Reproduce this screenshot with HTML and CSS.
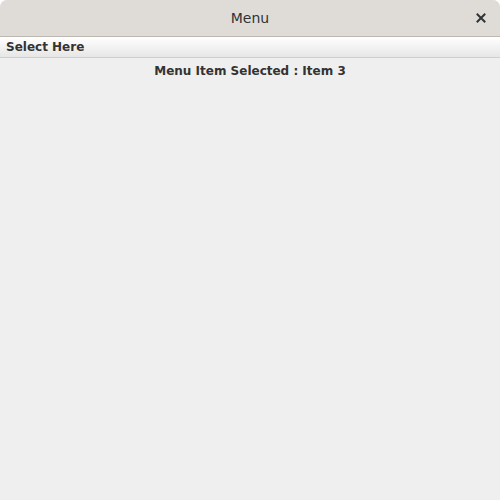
FILE: index.html
```html
<!DOCTYPE html>
<html>
<head>
<meta charset="utf-8">
<link rel="stylesheet" href="styles.css">
</head>
<body>
<div class="window">
  <div class="titlebar">
    <span class="title">Menu</span>
    <span class="close">
      <svg width="10" height="10" viewBox="0 0 10 10"><path d="M1.5 1.5 L8.5 8.5 M8.5 1.5 L1.5 8.5" stroke="#2e3436" stroke-width="2" stroke-linecap="square"/></svg>
    </span>
  </div>
  <div class="menubar"><span class="menu">Select Here</span></div>
  <div class="content">
    <div class="label">Menu Item Selected : Item 3</div>
  </div>
</div>
</body>
</html>
```
FILE: styles.css
```css
html, body {
  margin: 0;
  padding: 0;
  background: #ffffff;
}
.window {
  width: 500px;
  height: 500px;
  display: flex;
  flex-direction: column;
  background: #efefef;
  border-radius: 7px 7px 0 0;
  overflow: hidden;
  font-family: "DejaVu Sans", sans-serif;
}
.titlebar {
  height: 36px;
  flex: none;
  background: #dfdcd8;
  border-bottom: 1px solid #bfb8b0;
  display: flex;
  align-items: center;
  justify-content: center;
  position: relative;
}
.title {
  font-size: 14px;
  color: #2e3436;
}
.close {
  position: absolute;
  right: 14px;
  top: 13px;
  width: 10px;
  height: 10px;
  display: flex;
}
.menubar {
  height: 20px;
  flex: none;
  background: linear-gradient(#ffffff, #e6e6e6);
  border-bottom: 1px solid #cfcfcf;
  display: flex;
  align-items: center;
  padding-left: 6px;
}
.menu {
  font-size: 12px;
  font-weight: bold;
  color: #333333;
  margin-top: -1px;
}
.content {
  flex: 1;
  padding-top: 6px;
}
.label {
  text-align: center;
  font-size: 12px;
  font-weight: bold;
  color: #333333;
}
```
